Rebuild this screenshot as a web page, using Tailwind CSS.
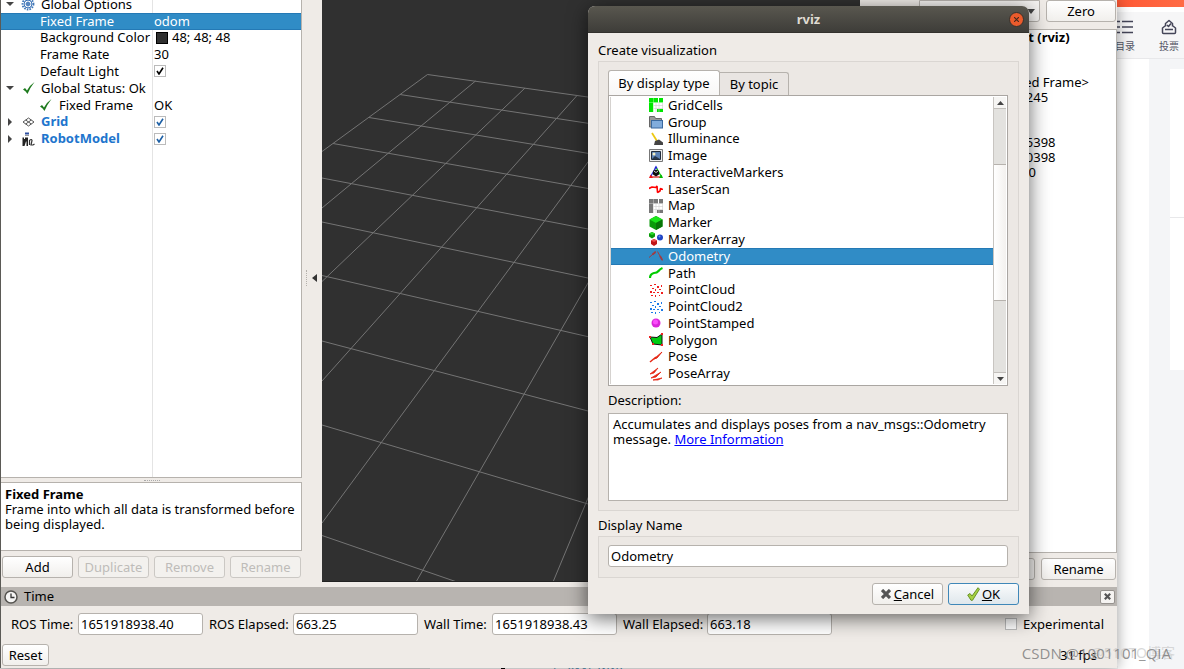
<!DOCTYPE html>
<html lang="en">
<head>
<meta charset="utf-8">
<title>rviz</title>
<script src="https://cdn.jsdelivr.net/npm/@tailwindcss/browser@4"></script>
</head>
<body class="bg-white">
<div class="relative h-screen overflow-hidden bg-white font-['Noto_Sans','Noto_Sans_CJK_SC',sans-serif] text-[13px] leading-[15px] text-black">

  <!-- Web page behind the windows -->
  <div class="flex h-full flex-col">
    <div class="h-[7px] bg-linear-to-r from-[#ff5a36] from-95% to-[#ff6b45]"></div>
    <header class="mt-[5px] flex h-[47px] shrink-0 items-center justify-end gap-6 border-b border-[#e8e8ea] bg-[#f6f6f7] pr-[5px] text-[10px] leading-3 text-[#555666]">
      <a href="#toc" class="flex flex-col items-center gap-[5px]">
        <svg class="h-4 w-5" viewBox="0 0 20 16" fill="none" stroke="#444558" stroke-width="1.5"><path d="M7 2.500h11M7 8h11M7 13.500h11M2 2.500h3M2 8h3M2 13.500h3"/></svg>
        <span>目录</span>
      </a>
      <a href="#vote" class="flex flex-col items-center gap-[5px]">
        <svg class="h-4 w-4" viewBox="0 0 16 16" fill="none" stroke="#444558" stroke-width="1.500" stroke-linejoin="round"><path d="M4 7 1.500 9v4.500a1 1 0 0 0 1 1h11a1 1 0 0 0 1-1V9L12 7M4 10.500h8M4.500 7.500V4.500L8 1.500l3.500 3v3M6 6l1.500 1.500L10 4.500"/></svg>
        <span>投票</span>
      </a>
    </header>
    <div class="flex flex-1 justify-end">
      <div class="w-[35px] bg-[#f4f5f7] pl-[21px] pt-[10px]">
        <div class="flex h-[301px] flex-col bg-white"><div class="h-[149px] border-b border-[#e8e8ea]"></div></div>
      </div>
    </div>
  </div>
  <div class="absolute bottom-0 left-0 right-[66px] flex h-[3px] overflow-hidden bg-[#f3f3f4] text-[12px] leading-3 text-[#4a85ab]">
    <div class="w-[430px] bg-[#d9d9d9]"></div><span class="ml-[71px] mt-px h-2 w-1 bg-black"></span><span class="ml-2">amount - 0115 WAY</span>
  </div>

  <!-- Main window -->
  <main class="absolute bottom-[1px] left-0 right-[67px] top-0 flex flex-col border-l border-[#5b5a56] bg-[#efebe7] shadow-[0_0_14px_rgba(0,0,0,0.4)]">
    <div class="flex min-h-0 flex-1">

      <!-- Displays panel -->
      <section class="flex w-[301px] shrink-0 flex-col pb-[9px]">
        <div class="relative flex-1 overflow-hidden border-b border-r border-[#b6b2ad] bg-white" role="tree">
          <div class="absolute inset-y-0 left-[151px] w-px bg-[#e4e4e4]"></div>
          <div class="relative -mt-1 grid h-[151px] grid-rows-9">
            <div class="flex items-center pl-[5px]" role="treeitem"><svg class="mr-[7px] h-2 w-2" viewBox="0 0 8 8"><path d="M0 2h8L4 6z" fill="#444"/></svg>
              <svg class="mr-[6px] h-[14px] w-[14px]" viewBox="0 0 14 14" fill="none" stroke="#3f76b8"><circle cx="7" cy="7" r="5.500" stroke-width="1.800" stroke-dasharray="1.600 1.100"/><circle cx="7" cy="7" r="4"/><circle cx="7" cy="7" r="1.500"/><path d="M7 3v8M3 7h8M4.200 4.200l5.600 5.600M9.800 4.200 4.200 9.800" stroke-width=".6"/></svg>Global Options</div>
            <div class="flex items-center border-y border-[#2479b5] bg-[#308cc6] pl-[39px] text-white" role="treeitem" aria-selected="true"><span class="w-[114px]">Fixed Frame</span><span>odom</span></div>
            <div class="flex items-center pl-[39px]" role="treeitem"><span class="w-[116px]">Background Color</span><span class="mr-1 h-3 w-3 border border-black bg-[#303030]"></span><span>48; 48; 48</span></div>
            <div class="flex items-center pl-[39px]" role="treeitem"><span class="w-[114px]">Frame Rate</span><span>30</span></div>
            <div class="flex items-center pl-[39px]" role="treeitem"><label for="light" class="w-[114px]">Default Light</label><span class="grid place-items-center"><input id="light" type="checkbox" checked class="col-start-1 row-start-1 h-3 w-3 appearance-none border border-[#bbb] bg-white"><svg class="pointer-events-none col-start-1 row-start-1 h-2 w-2" viewBox="0 0 8 8" fill="none" stroke="#000" stroke-width="1.600"><path d="m1 4 2 3L7 .8"/></svg></span></div>
            <div class="flex items-center pl-[5px]" role="treeitem"><svg class="mr-[9px] h-2 w-2" viewBox="0 0 8 8"><path d="M0 2h8L4 6z" fill="#444"/></svg><svg class="mr-[6px] h-3 w-3" viewBox="0 0 12 12"><path d="M0 7.500 2 6l2 2.500Q7 3 11.500 0 7.500 5 4.500 12 3 9 0 7.500z" fill="#1d7a1d"/></svg>Global Status: Ok</div>
            <div class="flex items-center pl-[39px]" role="treeitem"><svg class="mr-[7px] h-3 w-3" viewBox="0 0 12 12"><path d="M0 7.500 2 6l2 2.500Q7 3 11.500 0 7.500 5 4.500 12 3 9 0 7.500z" fill="#1d7a1d"/></svg><span class="w-[95px]">Fixed Frame</span><span>OK</span></div>
            <div class="flex items-center pl-[5px]" role="treeitem"><svg class="mr-[7px] h-2 w-2" viewBox="0 0 8 8"><path d="M2 0v8l4-4z" fill="#444"/></svg><svg class="mr-[6px] h-[14px] w-[14px]" viewBox="0 0 14 14" fill="none" stroke="#555" stroke-width="1"><path d="m7.500 3 5.500 4-5.500 4L2 7zM4.700 5l5.600 4M10.300 5 4.700 9"/></svg><label for="grid" class="w-[113px] font-bold text-[#2175cd]">Grid</label><span class="grid place-items-center"><input id="grid" type="checkbox" checked class="col-start-1 row-start-1 h-3 w-3 appearance-none border border-[#bbb] bg-white"><svg class="pointer-events-none col-start-1 row-start-1 h-2 w-2" viewBox="0 0 8 8" fill="none" stroke="#1c5fa5" stroke-width="1.600"><path d="m1 4 2 3L7 .8"/></svg></span></div>
            <div class="flex items-center pl-[5px]" role="treeitem"><svg class="mr-[7px] h-2 w-2" viewBox="0 0 8 8"><path d="M2 0v8l4-4z" fill="#444"/></svg><svg class="mr-[6px] h-[14px] w-[14px]" viewBox="0 0 14 14"><path d="M4 .5h4v2H4z" fill="#2c4ea0"/><path d="M4 3h4v1H4z" fill="#999"/><path d="M1.500 5.500H3v1.500h1V5.500h3V14H5.500V9.500H5L3.500 14H1.500z" fill="#222"/><path d="M8.500 13V8.500q2-2 2.500 0l-1 4.500h2l1.500-1" fill="none" stroke="#333" stroke-width="1.200"/></svg><label for="robot" class="w-[113px] font-bold text-[#2175cd]">RobotModel</label><span class="grid place-items-center"><input id="robot" type="checkbox" checked class="col-start-1 row-start-1 h-3 w-3 appearance-none border border-[#bbb] bg-white"><svg class="pointer-events-none col-start-1 row-start-1 h-2 w-2" viewBox="0 0 8 8" fill="none" stroke="#1c5fa5" stroke-width="1.600"><path d="m1 4 2 3L7 .8"/></svg></span></div>
          </div>
        </div>
        <div class="flex h-1 items-center justify-center"><span class="w-4 border-t border-dotted border-[#aaa]"></span></div>
        <div class="h-[69px] shrink-0 border border-l-0 border-[#b6b2ad] bg-white px-1 pt-1"><b>Fixed Frame</b><p>Frame into which all data is transformed before being displayed.</p></div>
        <div class="mt-[5px] grid h-[22px] shrink-0 grid-cols-4 gap-[5px] pl-px pr-px">
          <button class="rounded-[3px] border border-[#b6b2ad] bg-linear-to-b from-white to-[#f1efec]">Add</button>
          <button disabled class="rounded-[3px] border border-[#cbc8c4] bg-[#f3f1ee] text-[#bebcb9]">Duplicate</button>
          <button disabled class="rounded-[3px] border border-[#cbc8c4] bg-[#f3f1ee] text-[#bebcb9]">Remove</button>
          <button disabled class="rounded-[3px] border border-[#cbc8c4] bg-[#f3f1ee] text-[#bebcb9]">Rename</button>
        </div>
      </section>

      <div class="flex w-5 shrink-0 items-center justify-end gap-[5px] pb-8 pr-[5px]"><span class="h-4 border-l border-dotted border-[#b5b1ac]"></span><svg class="h-2 w-[5px]" viewBox="0 0 5 8"><path d="M5 0v8L0 4z" fill="#333"/></svg></div>

      <!-- 3D view -->
      <section class="mb-[5px] min-w-0 flex-1 border-b border-[#222] bg-[#303030]">
        <svg class="h-full w-full" fill="none" stroke="#747474" stroke-width="1"><g transform="translate(-322 0)">
          <path d="M427.500 74.500 748 119.500M400 94.500 748 147.800M369 117.500 748 179.500M333 143.500 748 216.700M322 178 748 259.700M322 222 748 311.700M322 275.500 748 373.500M322 341 748 453.100M322 425 748 551.500M322 535.500 457 582"/>
          <path d="M427.500 74.500 322 151.500M475.500 81 322 208M525 88 322 281.500M577 95.500 322 381M630 104 588 162 322 523M700 104 588 283 416 582M780 104 588 498 553 582"/>
        </g></svg>
      </section>

      <!-- Views panel -->
      <section class="flex w-[257px] shrink-0 flex-col pb-[7px]">
        <div class="flex h-[22px] shrink-0 justify-end gap-[6px] pr-px">
          <div class="relative w-[121px]"><select aria-label="View type" class="h-full w-full appearance-none rounded-b-[3px] border border-[#b6b2ad] bg-[#f5f3f1] pl-4"><option>Orbit (rviz)</option></select><svg class="pointer-events-none absolute right-[5px] top-[9px] h-[5px] w-2" viewBox="0 0 8 5"><path d="M0 0h8L4 5z" fill="#444"/></svg></div>
          <button class="w-[70px] rounded-[3px] border border-[#b6b2ad] bg-linear-to-b from-white to-[#f1efec]">Zero</button>
        </div>
        <div class="mt-[7px] flex-1 border-y border-r border-[#b6b2ad] bg-white">
          <div class="grid auto-rows-[15px] pl-[140px]">
            <b>Orbit (rviz)</b><span>0.01</span><span></span><span>&lt;Fixed Frame&gt;</span><span>10.1245</span><span>0.05</span><span></span><span>0.785398</span><span>0.780398</span><span>0; 0; 0</span>
          </div>
        </div>
        <div class="mt-[5px] flex h-[22px] shrink-0 justify-end gap-[6px] pr-px">
          <button class="w-[75px] rounded-[3px] border border-[#b6b2ad] bg-[#f5f3f1]">Remove</button>
          <button class="w-[75px] rounded-[3px] border border-[#b6b2ad] bg-linear-to-b from-white to-[#f1efec]">Rename</button>
        </div>
      </section>
    </div>

    <!-- Time panel -->
    <section class="shrink-0 pb-[2px]">
      <div class="flex h-[19px] items-center gap-[6px] bg-[#b8b4b0] pl-[3px] pr-[2px]">
        <svg class="h-[14px] w-[14px]" viewBox="0 0 14 14"><circle cx="7" cy="7" r="6" fill="#f6f5f4" stroke="#55534f" stroke-width="1.500"/><path d="M7 3.500V7.500h3.500" fill="none" stroke="#333" stroke-width="1.300"/></svg>
        <span class="flex-1">Time</span>
        <button aria-label="Close panel" class="grid h-[14px] w-[15px] place-items-center rounded-[2px] border border-[#96928e] bg-[#f5f3f1]"><svg class="h-[7px] w-[7px]" viewBox="0 0 7 7" stroke="#555" stroke-width="2.200"><path d="m.8.8 5.400 5.400M6.200.8.8 6.200"/></svg></button>
      </div>
      <form class="mt-[7px] flex h-[22px] items-center gap-[6px] whitespace-nowrap pl-[10px] pr-[13px]">
        <label for="t1" class="w-[61px]">ROS Time:</label><input id="t1" value="1651918938.40" class="h-full w-[125px] rounded-[3px] border border-[#b6b2ad] bg-white px-[2px]">
        <label for="t2" class="w-[78px]">ROS Elapsed:</label><input id="t2" value="663.25" class="h-full w-[125px] rounded-[3px] border border-[#b6b2ad] bg-white px-[2px]">
        <label for="t3" class="w-[62px]">Wall Time:</label><input id="t3" value="1651918938.43" class="h-full w-[125px] rounded-[3px] border border-[#b6b2ad] bg-white px-[2px]">
        <label for="t4" class="w-[78px]">Wall Elapsed:</label><input id="t4" value="663.18" class="h-full w-[125px] rounded-[3px] border border-[#b6b2ad] bg-white px-[2px]">
        <input id="exp" type="checkbox" class="ml-auto h-3 w-3 appearance-none border border-[#bbb] bg-white"><label for="exp">Experimental</label>
      </form>
      <div class="mt-[9px] flex h-[22px] items-center justify-between pl-px pr-5">
        <button class="h-full w-[47px] rounded-[3px] border border-[#b6b2ad] bg-linear-to-b from-white to-[#f1efec]">Reset</button><span>31 fps</span>
      </div>
    </section>
  </main>

  <!-- Watermarks -->
  <div class="absolute bottom-2 right-[9px] text-[14px] leading-4 text-[#c9c9c9]/70">@51CTO博客</div>
  <div class="absolute bottom-2 right-[13px] font-['Open_Sans'] text-[15px] leading-4 text-[#777]/80">CSDN @1001101_QIA</div>

  <!-- Dialog -->
  <section role="dialog" aria-label="rviz" class="absolute left-[588px] top-[6px] flex w-[441px] flex-col rounded-t-[7px] bg-[#efebe7] shadow-[0_4px_20px_rgba(0,0,0,0.6)]">
    <div class="relative flex h-[27px] items-center justify-center rounded-t-[7px] border-b border-[#33322e] bg-linear-to-b from-[#59574f] to-[#3e3d39] font-bold text-[#dfdbd2]">rviz
      <button aria-label="Close" class="absolute right-[5px] top-[6px] grid h-[15px] w-[15px] place-items-center rounded-full border border-[#33322e] bg-[#ea5b2c]"><svg class="h-[5px] w-[5px]" viewBox="0 0 5 5" stroke="#40291f" stroke-width="1.100"><path d="m0 0 5 5M5 0 0 5"/></svg></button>
    </div>
    <div class="px-[10px] pb-[9px] pt-[10px]">
      <h2>Create visualization</h2>
      <div class="mt-[3px] border border-[#dad6d2] bg-[#ece8e4] pb-[9px] pl-[9px] pr-[10px] pt-2">
        <div class="flex items-end" role="tablist">
          <button role="tab" aria-selected="true" class="h-[25px] w-[112px] rounded-t-[3px] border border-b-0 border-[#b6b2ad] bg-linear-to-b from-white to-[#f8f7f6]">By display type</button>
          <button role="tab" class="h-[23px] w-[69px] rounded-tr-[3px] border border-b-0 border-l-0 border-[#b6b2ad] bg-[#e9e5e2]">By topic</button>
        </div>
        <div class="flex h-[291px] border border-[#aaa6a2] bg-white p-px">
          <div class="min-w-0 flex-1 overflow-hidden border-l border-[#d5d2cf]">
            <ul class="grid h-[285px] grid-rows-17" role="listbox">
              <li class="flex items-center gap-[5px] pl-[38px]" role="option"><svg class="h-[14px] w-[14px]" viewBox="0 0 14 14"><path d="M0 0h9v4.500H4V14H0zM10 0h4v4.500h-4zM8 11h6v3H8z" fill="#00e600"/><path d="M4.500 7.500h9.500M4.500 10.500h9.500M7 5v9M10 5v9M13.500 5v6" stroke="#ccc" stroke-width=".6"/><path d="M4.500 0v14M0 4.500h14" stroke="#9f9" stroke-width=".5"/></svg>GridCells</li>
              <li class="flex items-center gap-[5px] pl-[38px]" role="option"><svg class="h-[14px] w-[14px]" viewBox="0 0 14 14"><path d="M.5 12V1.500h5l1 2h6V12z" fill="#999" stroke="#666"/><rect x="2.500" y="5.500" width="11" height="7.500" fill="#81acdc" stroke="#3a699f"/></svg>Group</li>
              <li class="flex items-center gap-[5px] pl-[38px]" role="option"><svg class="h-[14px] w-[14px]" viewBox="0 0 14 14"><path d="m3 1 5 8" stroke="#edc813" stroke-width="1.800"/><path d="m6 9 4-1.500 4 3V13H5z" fill="#444"/></svg>Illuminance</li>
              <li class="flex items-center gap-[5px] pl-[38px]" role="option"><svg class="h-[14px] w-[14px]" viewBox="0 0 14 14"><path d="M.5.5h13v12H.5z" fill="#eee" stroke="#777"/><path d="M2.500 2.500h9v8h-9z" fill="#5d83b6" stroke="#222c3b"/><circle cx="5" cy="5" r="1.500" fill="#f7f0c4"/><path d="m3 10 3-3 5 3z" fill="#26364b"/></svg>Image</li>
              <li class="flex items-center gap-[5px] pl-[38px]" role="option"><svg class="h-[14px] w-[14px]" viewBox="0 0 14 14" fill="none"><path d="m7 2-5 9" stroke="#22c" stroke-width="1.200"/><path d="m7 2 5 9" stroke="#0b0" stroke-width="1.200"/><path d="M2 12h10" stroke="#d11" stroke-width="1.200"/><path d="m7 .5 1.700 3H5.300z" fill="#22d"/><path d="m0 13 1.500-3.500L4 13z" fill="#e11"/><path d="m14 13-1.500-3.500L10 13z" fill="#0b0"/><path d="m7 4.500 3 1.500v3.500L7 11.500 4 9.500V6z" fill="#111"/><path d="m5 6.200 2 1.300 2-1.300" stroke="#eee" stroke-width=".8"/></svg>InteractiveMarkers</li>
              <li class="flex items-center gap-[5px] pl-[38px]" role="option"><svg class="h-[14px] w-[14px]" viewBox="0 0 14 14" fill="none" stroke="#f00" stroke-width="1.600" stroke-linejoin="bevel"><path d="m0 6.500 3-1.500 4 .5 1-1.500.5 6.500L11 9l.5-2.500L14 7.500"/></svg>LaserScan</li>
              <li class="flex items-center gap-[5px] pl-[38px]" role="option"><svg class="h-[14px] w-[14px]" viewBox="0 0 14 14"><path d="M0 0h9v4.500H4V14H0zM10 0h4v4.500h-4zM8 11h6v3H8z" fill="#777"/><path d="M4.500 7.500h9.500M4.500 10.500h9.500M7 5v9M10 5v9M13.500 5v6" stroke="#ccc" stroke-width=".6"/><path d="M4.500 0v14M0 4.500h14" stroke="#ccc" stroke-width=".5"/></svg>Map</li>
              <li class="flex items-center gap-[5px] pl-[38px]" role="option"><svg class="h-[14px] w-[14px]" viewBox="0 0 14 14"><path d="m7 0 6.500 3.500v7L7 14 .5 10.500v-7z" fill="#0a9a0a"/><path d="m7 0 6.500 3.500L7 7 .5 3.500z" fill="#1be41b"/><path d="m7 7 6.500-3.500v7L7 14z" fill="#087508"/></svg>Marker</li>
              <li class="flex items-center gap-[5px] pl-[38px]" role="option"><svg class="h-[14px] w-[14px]" viewBox="0 0 14 14"><path d="m3 0 3 1.500v3L3 6.500 0 4.500v-3z" fill="#0b980b"/><path d="m3 0 3 1.500L3 3 0 1.500z" fill="#2bdd2b"/><circle cx="11" cy="5.500" r="3" fill="#1f45c4"/><circle cx="10.500" cy="4.500" r="1" fill="#7090f0"/><path d="m5 7 3 1.500v3.500L5 14l-3-2V8.500z" fill="#c01616"/><path d="m5 7 3 1.500L5 10 2 8.500z" fill="#ee5050"/></svg>MarkerArray</li>
              <li class="flex items-center gap-[5px] border-y border-[#2479b5] bg-[#308cc6] pl-[38px] text-white" role="option" aria-selected="true"><svg class="h-[14px] w-[14px]" viewBox="0 0 14 14" fill="none" stroke="#a03c42" stroke-width="1"><path d="m0 8.500 7-6M8.500 2.500l5 9"/><path d="m3.500 5.500 3-2.500M11 7l2.300 4" stroke-width="1.800"/></svg>Odometry</li>
              <li class="flex items-center gap-[5px] pl-[38px]" role="option"><svg class="h-[14px] w-[14px]" viewBox="0 0 14 14" fill="none" stroke="#0c0" stroke-width="2.200"><path d="M1 12q0-4 4-5 3 0 4.500-2T13.500 2"/></svg>Path</li>
              <li class="flex items-center gap-[5px] pl-[38px]" role="option"><svg class="h-[14px] w-[14px]" viewBox="0 0 14 14"><path d="M1 2h2v1H1zM5 1h2v1H5zM8 3h2v2H8zM12 2h1v2h-1zM3 5h2v1H3zM6 6h1v2H6zM10 6h2v1h-2zM1 8h2v2H1zM4 9h2v1H4zM8 9h2v1H8zM12 9h2v2h-2zM6 12h1v2H6zM10 12h1v1h-1zM2 12h2v1H2z" fill="#f12020"/></svg>PointCloud</li>
              <li class="flex items-center gap-[5px] pl-[38px]" role="option"><svg class="h-[14px] w-[14px]" viewBox="0 0 14 14"><path d="M1 2h2v1H1zM5 1h2v1H5zM8 3h2v2H8zM12 2h1v2h-1zM3 5h2v1H3zM6 6h1v2H6zM10 6h2v1h-2zM1 8h2v2H1zM4 9h2v1H4zM8 9h2v1H8zM12 9h2v2h-2zM6 12h1v2H6zM10 12h1v1h-1zM2 12h2v1H2z" fill="#1d7be8"/></svg>PointCloud2</li>
              <li class="flex items-center gap-[5px] pl-[38px]" role="option"><svg class="h-[14px] w-[14px]" viewBox="0 0 14 14"><circle cx="7" cy="7" r="4.500" fill="#d926d9"/><circle cx="6.500" cy="6" r="2.500" fill="#fb4dfb"/></svg>PointStamped</li>
              <li class="flex items-center gap-[5px] pl-[38px]" role="option"><svg class="h-[14px] w-[14px]" viewBox="0 0 14 14"><path d="m1 4 7 .5L13 1v11l-9-1z" fill="#0c1" stroke="#111"/><path d="M0 3h2v2H0zM12 0h2v2h-2zM12 11h2v2h-2zM3 10h2v2H3z" fill="#e22"/></svg>Polygon</li>
              <li class="flex items-center gap-[5px] pl-[38px]" role="option"><svg class="h-[14px] w-[14px]" viewBox="0 0 14 14" stroke="#e52715"><path d="m1 12 6-5" stroke-width="1.500"/><path d="m5 9 8-7-5 6z" fill="#e52715"/></svg>Pose</li>
              <li class="flex items-center gap-[5px] pl-[38px]" role="option"><svg class="h-[14px] w-[14px]" viewBox="0 0 14 14" stroke="#e52715" fill="#e52715"><path d="m1 7 8-6-4 5zM2 11l10-6-5 5zM4 13l9-2-4 2z" stroke-width=".8"/></svg>PoseArray</li>
            </ul>
          </div>
          <div class="flex w-[13px] flex-col border-l border-[#c8c5c1] bg-[#e3e2df]" aria-hidden="true">
            <div class="grid h-[12px] place-items-center border-b border-[#c2bfbb] bg-[#f6f5f3]"><svg class="h-1 w-[7px]" viewBox="0 0 7 4"><path d="M0 4h7L3.500 0z" fill="#444"/></svg></div>
            <div class="h-[55px]"></div>
            <div class="h-[137px] border-y border-[#b6b2ad] bg-linear-to-r from-white to-[#f3f1ee]"></div>
            <div class="flex-1"></div>
            <div class="grid h-[12px] place-items-center border-t border-[#c2bfbb] bg-[#f6f5f3]"><svg class="h-1 w-[7px]" viewBox="0 0 7 4"><path d="M0 0h7L3.500 4z" fill="#444"/></svg></div>
          </div>
        </div>
        <h3 class="mt-[7px]">Description:</h3>
        <div class="mt-[5px] h-[88px] border border-[#b6b2ad] bg-white px-1 pt-[3px]">Accumulates and displays poses from a nav_msgs::Odometry message. <a href="#more" class="text-[#0000ff] underline">More Information</a></div>
      </div>
      <label for="name" class="mt-[7px] block">Display Name</label>
      <div class="mt-[3px] border border-[#dad6d2] bg-[#ece8e4] pb-[10px] pl-[9px] pr-[10px] pt-2"><input id="name" value="Odometry" class="block h-[22px] w-full rounded-[3px] border border-[#b6b2ad] bg-white px-[2px]"></div>
      <div class="mt-[5px] flex h-[22px] justify-end gap-[5px]">
        <button class="flex w-[71px] items-center justify-center gap-[3px] rounded-[3px] border border-[#b6b2ad] bg-linear-to-b from-white to-[#f1efec]"><svg class="h-[10px] w-[10px]" viewBox="0 0 10 10" stroke="#555" stroke-width="3.200"><path d="m1 1 8 8M9 1 1 9"/></svg><span><u>C</u>ancel</span></button>
        <button class="flex w-[71px] items-center justify-center gap-[2px] rounded-[3px] border border-[#3f87b8] bg-linear-to-b from-[#fafbfc] to-[#dfe7ec]"><svg class="h-[14px] w-[13px]" viewBox="0 0 13 14"><path d="m.7 8 2.300-1.500 2 2.500L11 .7l1.500 1.500L5.500 13.300H4z" fill="#a5d044" stroke="#5f8a1c" stroke-width=".9" stroke-linejoin="round"/></svg><span><u>O</u>K</span></button>
      </div>
    </div>
  </section>
</div>
</body>
</html>
